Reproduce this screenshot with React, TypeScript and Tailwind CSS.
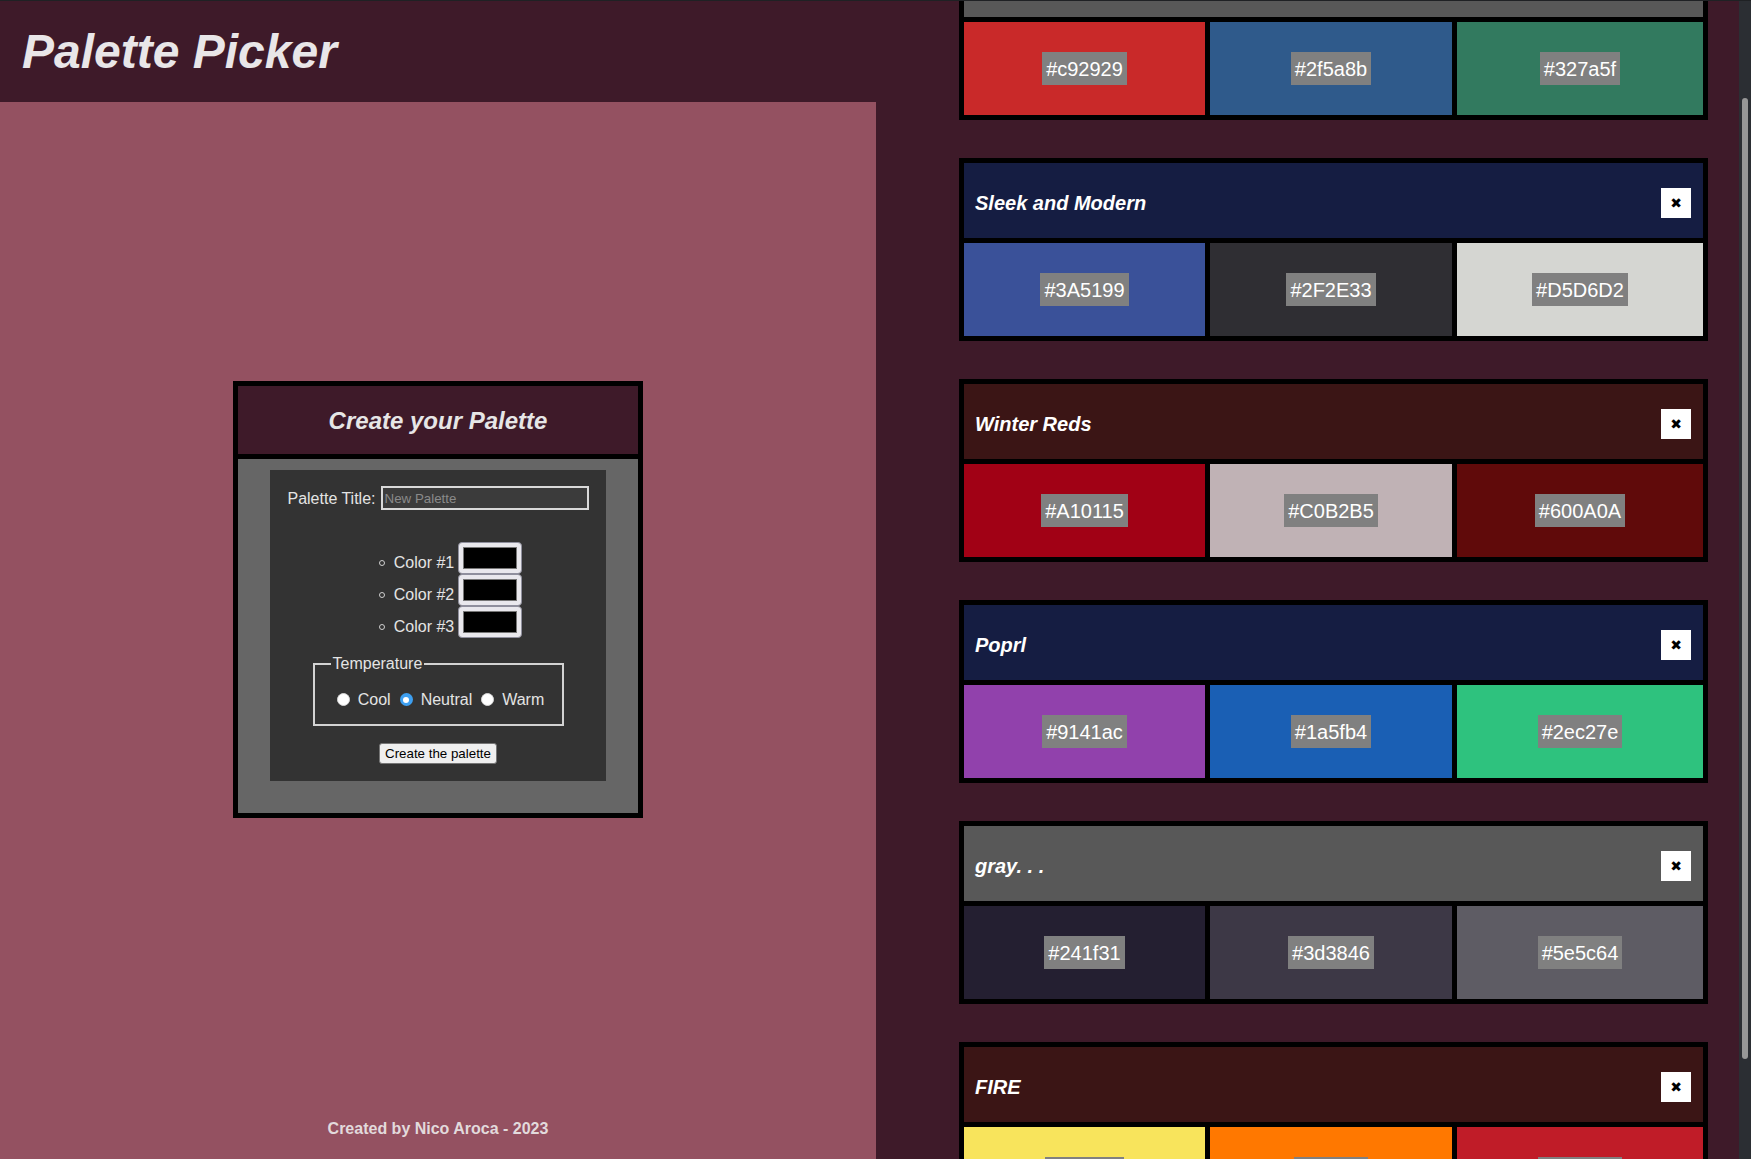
import React, { useLayoutEffect, useRef } from "react";

type Palette = { title: string; header: string; colors: string[] };

const palettes: Palette[] = [
  { title: "Primary", header: "#585858", colors: ["#c92929", "#2f5a8b", "#327a5f"] },
  { title: "Sleek and Modern", header: "#151d42", colors: ["#3A5199", "#2F2E33", "#D5D6D2"] },
  { title: "Winter Reds", header: "#3b1515", colors: ["#A10115", "#C0B2B5", "#600A0A"] },
  { title: "Poprl", header: "#151d42", colors: ["#9141ac", "#1a5fb4", "#2ec27e"] },
  { title: "gray. . .", header: "#585858", colors: ["#241f31", "#3d3846", "#5e5c64"] },
  { title: "FIRE", header: "#3b1515", colors: ["#f8e45c", "#ff7800", "#c01c28"] },
];

function PaletteCard({ p }: { p: Palette }) {
  return (
    <div className="w-[749px] bg-black p-[5px] flex flex-col gap-[5px] shrink-0">
      <div
        className="h-[75px] flex items-center justify-between pl-[11px] pr-[12px] pt-[5px]"
        style={{ backgroundColor: p.header }}
      >
        <h3 className="text-[20px] font-bold italic text-white leading-none">{p.title}</h3>
        <button className="w-[30px] h-[30px] bg-white flex items-center justify-center text-black text-[14px] leading-none font-['DejaVu_Sans',sans-serif]">
          ✖
        </button>
      </div>
      <div className="h-[93px] grid grid-cols-[241fr_242fr_246fr] gap-[5px]">
        {p.colors.map((c) => (
          <div key={c} className="flex items-center justify-center" style={{ backgroundColor: c }}>
            <span className="bg-[#808080] text-white text-[20px] h-[33px] leading-[35px] px-[4px]">{c}</span>
          </div>
        ))}
      </div>
    </div>
  );
}

function Radio({ checked }: { checked?: boolean }) {
  return checked ? (
    <span className="w-[13px] h-[13px] rounded-full bg-[#3d9ff0] flex items-center justify-center ml-[5px] mr-[3px] shrink-0">
      <span className="w-[6px] h-[6px] rounded-full bg-white" />
    </span>
  ) : (
    <span className="w-[13px] h-[13px] rounded-full bg-white border border-[#d8d8d8] ml-[5px] mr-[3px] shrink-0" />
  );
}

function ColorBox() {
  return (
    <span className="w-[64px] h-[32px] bg-[#e9e8ed] border border-[#8f8f9d] rounded-[4px] flex items-center justify-center shrink-0">
      <span className="w-[54px] h-[22px] bg-black border border-[#777777]" />
    </span>
  );
}

export default function App() {
  const ref = useRef<HTMLDivElement>(null);
  useLayoutEffect(() => {
    if (ref.current) ref.current.scrollTop = 119;
  }, []);

  return (
    <div className="h-screen flex flex-col bg-[#3e1a29] font-['Liberation_Sans',Arial,sans-serif] overflow-hidden">
      <div className="h-px bg-[#1f2124] shrink-0" />
      <div className="flex flex-1 min-h-0">
        {/* Left column */}
        <div className="w-[876px] shrink-0 flex flex-col">
          <header className="h-[101px] shrink-0 bg-[#3e1a29] flex items-center pl-[22px]">
            <h1 className="text-[48px] font-bold italic text-[#e9e6e8] leading-none">Palette Picker</h1>
          </header>
          <main className="flex-1 bg-[#945161] flex flex-col">
            <div className="flex-1 flex items-center justify-center">
              <div className="w-[410px] border-[5px] border-black bg-black flex flex-col gap-[5px]">
                <div className="h-[68px] bg-[#3e1a29] flex items-center justify-center">
                  <h2 className="text-[24px] font-bold italic text-[#e6e6e6] leading-none pt-[2px]">Create your Palette</h2>
                </div>
                <div className="h-[354px] bg-[#666666] pt-[11px] px-[32px]">
                  <form className="h-[311px] bg-[#333333] text-[#e4e4e4] flex flex-col pt-[16px]">
                    <div className="flex items-center justify-center h-[24px]">
                      <label className="text-[16px] leading-[18px] mr-[5px] mt-[1px]">Palette Title:</label>
                      <input
                        className="w-[208px] h-[24px] border-2 border-[#d9d9d9] bg-[#3b3b3b] px-[2px] text-[13.33px] text-white placeholder:text-[#8a8a8a] outline-none"
                        placeholder="New Palette"
                      />
                    </div>
                    <div className="mt-[32px] pl-[40px] flex flex-col">
                      {[1, 2, 3].map((n) => (
                        <div key={n} className="h-[32px] flex items-center justify-center">
                          <span className="w-[6px] h-[6px] rounded-full border border-[#cfcfcf] -ml-[15px] mr-[9px] mt-[9px] shrink-0" />
                          <span className="text-[16px] leading-[18px] mr-[4px] mt-[10px]">Color #{n}</span>
                          <ColorBox />
                        </div>
                      ))}
                    </div>
                    <fieldset className="mt-[17px] mx-auto w-[251px] border-2 border-[#d3d3d3] pl-[16px] pr-[12px]">
                      <legend className="px-[2px] text-[16px] leading-[18px]">Temperature</legend>
                      <div className="h-[51px] pt-[2px] -ml-[16px] -mr-[12px] flex items-center justify-center text-[16px] leading-[18px]">
                        <Radio />
                        <span className="ml-[5px] mr-[4px]">Cool</span>
                        <Radio checked />
                        <span className="ml-[5px] mr-[4px]">Neutral</span>
                        <Radio />
                        <span className="ml-[5px]">Warm</span>
                      </div>
                    </fieldset>
                    <div className="flex justify-center mt-[17px]">
                      <button
                        type="button"
                        className="h-[21px] px-[5px] pt-[1px] bg-[#efefef] border border-[#767676] rounded-[3px] text-[13.33px] text-black leading-none"
                      >
                        Create the palette
                      </button>
                    </div>
                  </form>
                </div>
              </div>
            </div>
            <footer className="h-[62px] shrink-0 flex items-center justify-center pt-[2px]">
              <p className="text-[16px] font-bold text-[#e2dadc]">Created by Nico Aroca - 2023</p>
            </footer>
          </main>
        </div>

        {/* Right column */}
        <div className="flex-1 flex min-w-0">
          <div ref={ref} className="flex-1 overflow-y-scroll [scrollbar-width:none]">
            <div className="pl-[83px] pt-[55px] pb-[55px] flex flex-col gap-[38px]">
              {palettes.map((p) => (
                <PaletteCard key={p.title} p={p} />
              ))}
            </div>
          </div>
          {/* scrollbar track */}
          <div className="w-[12px] shrink-0 bg-[#2b2e33] pt-[97px]">
            <div className="mx-[3px] w-[6px] h-[961px] rounded-full bg-[#979797]" />
          </div>
        </div>
      </div>
    </div>
  );
}
